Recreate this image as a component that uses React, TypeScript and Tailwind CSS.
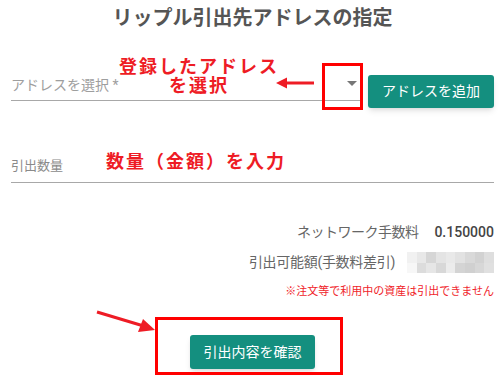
const blurCells = [
  "bg-[#f1f1f1]", "bg-[#e8e8e8]", "bg-[#d6d6d6]", "bg-[#e4e4e4]", "bg-[#e9e9e9]", "bg-[#e2e2e2]", "bg-[#d9d9d9]", "bg-[#d2d2d2]", "bg-[#dedede]",
  "bg-[#f7f7f7]", "bg-[#dcdcdc]", "bg-[#e6e6e6]", "bg-[#d8d8d8]", "bg-[#ececec]", "bg-[#d4d4d4]", "bg-[#d0d0d0]", "bg-[#d7d7d7]", "bg-[#e0e0e0]",
];

function BlurredValue() {
  return (
    <div className="grid h-[21px] w-[87px] grid-cols-9 grid-rows-2">
      {blurCells.map((c, i) => (
        <div key={i} className={c} />
      ))}
    </div>
  );
}

export default function App() {
  return (
    <div
      className="relative h-[376px] w-[500px] overflow-hidden bg-white pl-[11px] pr-[6px]"
      style={{ fontFamily: 'Roboto, "Noto Sans CJK JP", sans-serif' }}
    >
      <h1 className="pt-[4px] text-center text-[20px] font-bold leading-[28px] text-[#555]">
        リップル引出先アドレスの指定
      </h1>

      {/* address select */}
      <div className="mt-[43px] flex items-start gap-[8px]">
        <div className="flex h-[26px] w-[349px] items-start justify-between border-b border-[#a8a8a8]">
          <span className="text-[14px] leading-[20px] text-[#9e9e9e]">アドレスを選択 *</span>
          <span className="mr-[3px] mt-[6px] h-0 w-0 border-x-[5px] border-t-[5px] border-x-transparent border-t-[#777]" />
        </div>
        <button className="h-[33px] w-[126px] rounded-[3px] bg-[#148f7f] text-[14px] text-white shadow-md">
          アドレスを追加
        </button>
      </div>

      {/* amount */}
      <div className="mt-[42px] h-[33px] border-b border-[#a8a8a8] pt-[3px]">
        <span className="text-[13px] leading-[20px] text-[#8a8a8a]">引出数量</span>
      </div>

      {/* info */}
      <div className="mt-[39px] flex items-center justify-end gap-[16px] text-[14px] leading-[20px]">
        <span className="tracking-[-0.5px] text-[#666]">ネットワーク手数料</span>
        <span className="font-medium text-[#444]">0.150000</span>
      </div>
      <div className="mt-[10px] flex items-center justify-end gap-[12px] text-[14px] leading-[21px]">
        <span className="tracking-[-0.3px] text-[#666]">引出可能額(手数料差引)</span>
        <BlurredValue />
      </div>
      <p className="mt-[11px] text-right text-[11px] leading-[16px] text-[#f0242a]">
        ※注文等で利用中の資産は引出できません
      </p>

      <div className="mt-[35px] flex justify-center">
        <button className="h-[34px] w-[125px] rounded-[3px] bg-[#148f7f] text-[14px] text-white shadow-md">
          引出内容を確認
        </button>
      </div>

      {/* annotations */}
      <div className="absolute left-[110px] top-[57px] w-[178px] text-center text-[18px] font-bold leading-[19px] tracking-[2px] text-[#ee1c25]">
        登録したアドレス
        <br />
        を選択
      </div>
      <svg className="absolute left-[274px] top-[76px]" width="44" height="14" viewBox="0 0 44 14">
        <line x1="10" y1="7" x2="40" y2="7" stroke="#ee1c25" strokeWidth="3" />
        <polygon points="2,7 13,1.5 13,12.5" fill="#ee1c25" />
      </svg>
      <div className="absolute left-[322px] top-[63px] h-[47px] w-[41px] border-[3px] border-[#ff0000]" />

      <div className="absolute left-[106px] top-[151px] text-[18px] font-bold leading-[22px] tracking-[2px] text-[#ee1c25]">
        数量（金額）を入力
      </div>

      <svg className="absolute left-[94px] top-[308px]" width="64" height="28" viewBox="0 0 64 28">
        <line x1="3" y1="4" x2="48" y2="17.5" stroke="#ee1c25" strokeWidth="3" />
        <polygon points="61,22 44,24 49,11" fill="#ee1c25" />
      </svg>
      <div className="absolute left-[155px] top-[317px] h-[58px] w-[188px] border-[3px] border-[#ff0000]" />
    </div>
  );
}
